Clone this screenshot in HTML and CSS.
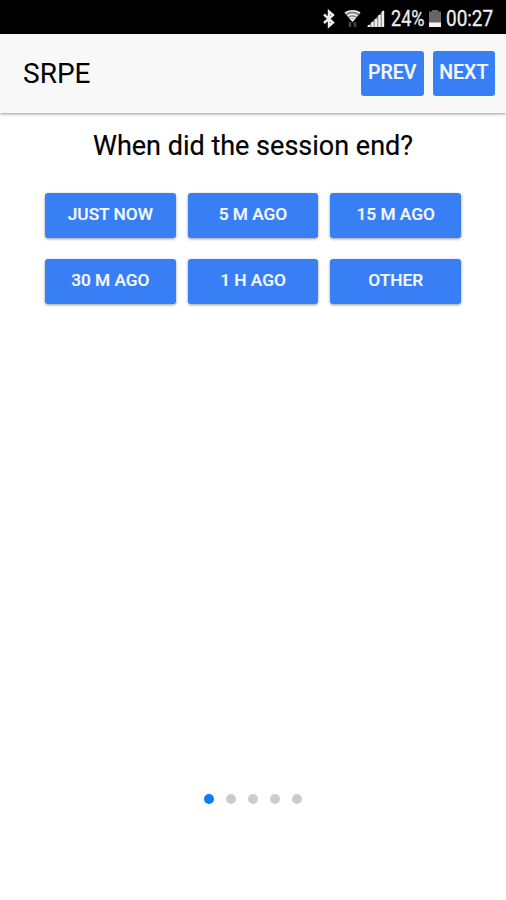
FILE: index.html
```
<!DOCTYPE html>
<html lang="en">
<head>
    <meta charset="UTF-8">
    <meta name="viewport" content="width=device-width, initial-scale=1.0">
    <title>SRPE</title>
    <link rel="stylesheet" href="styles.css">
</head>
<body>

    <div class="status-bar">
        <svg class="bluetooth" width="14" height="20" viewBox="0 0 14 20">
            <path d="M2 5.500L11 13.500L7 17V2.500L11 6L2 14" fill="none" stroke="#eee" stroke-width="2.400"/>
        </svg>
        <svg class="wifi" width="17" height="20" viewBox="0 0 17 20">
            <path d="M.5 4Q8.500 -1 16.500 4L8.500 13Z" fill="#888"/>
            <path d="M1 4Q8.500 -.5 16 4M3.500 7Q8.500 3.500 13.500 7M5.500 9.500Q8.500 7.500 11.500 9.500" fill="none" stroke="#eee" stroke-width="1.700"/>
            <path d="M6 10h5l-2.500 3z" fill="#eee"/>
            <path d="M6 13v5M11 13v5" stroke="#444" stroke-width="2.500"/>
        </svg>
        <svg class="signal" width="18" height="20" viewBox="0 0 18 20">
            <path d="M0 18L17 1V18Z" fill="#888"/>
            <path d="M2 18v-2M5.500 18v-5M9 18v-8M12.500 18v-12M16 18v-16" stroke="#eee" stroke-width="2.400"/>
        </svg>
        <span class="percent">24%</span>
        <svg class="battery" width="12" height="20" viewBox="0 0 12 20">
            <path d="M0 2.500h3V1h6v1.500h3V14H0z" fill="#666"/>
            <path d="M0 13.500h12V18H0z" fill="#f4f4f4"/>
        </svg>
        <span class="clock">00:27</span>
    </div>

    <header class="toolbar">
        <h1>SRPE</h1>
        <div class="nav-buttons">
            <button type="button">PREV</button>
            <button type="button">NEXT</button>
        </div>
    </header>

    <main class="content">
        <h2>When did the session end?</h2>
        <div class="options">
            <button type="button">JUST NOW</button>
            <button type="button">5 M AGO</button>
            <button type="button">15 M AGO</button>
            <button type="button">30 M AGO</button>
            <button type="button">1 H AGO</button>
            <button type="button">OTHER</button>
        </div>
    </main>

    <div class="pager">
        <span class="bullet active"></span>
        <span class="bullet"></span>
        <span class="bullet"></span>
        <span class="bullet"></span>
        <span class="bullet"></span>
    </div>

</body>
</html>
```
FILE: styles.css
```
* {
    box-sizing: border-box;
}
body {
    font-family: Roboto, sans-serif;
    background-color: #fff;
    color: #000;
    margin: 0;
    height: 900px;
    display: flex;
    flex-direction: column;
    overflow: hidden;
}
.status-bar {
    height: 34px;
    padding: 3px 12px 0 0;
    background-color: #000;
    color: #eee;
    display: flex;
    justify-content: flex-end;
    align-items: center;
    font-size: 22px;
    line-height: 30px;
    white-space: nowrap;
}
.wifi {
    margin-left: 8px;
}
.signal {
    margin-left: 6px;
}
/* status text is slightly condensed */
.percent,
.clock {
    -webkit-text-stroke: 0.3px #eee;
    transform-origin: left center;
}
.percent {
    width: 34px;
    margin-left: 6px;
    transform: scaleX(0.82);
}
.battery {
    margin-left: 4px;
}
.clock {
    width: 48px;
    margin-left: 5px;
    transform: scaleX(0.86);
}
.toolbar {
    height: 79px;
    padding: 0 11px 0 23px;
    background-color: #f8f8f8;
    box-shadow: 0 1px 3px rgba(0, 0, 0, 0.4);
    display: flex;
    justify-content: space-between;
    align-items: center;
}
h1 {
    margin: 0;
    font-size: 28px;
    font-weight: 400;
}
.nav-buttons {
    display: flex;
    gap: 9px;
}
button {
    height: 45px;
    padding: 0 0 3px;
    border: none;
    border-radius: 3px;
    background-color: #387ef5;
    color: #f4f8ff;
    font-family: inherit;
    font-weight: 500;
    white-space: nowrap;
    -webkit-text-stroke: 0.2px #f4f8ff;
}
.nav-buttons button {
    width: 62.5px;
    padding-bottom: 2px;
    font-size: 19.5px;
}
h2 {
    margin: 0;
    padding-top: 15px;
    font-size: 27px;
    line-height: 36px;
    font-weight: 400;
    text-align: center;
    -webkit-text-stroke: 0.2px #000;
}
.options {
    display: grid;
    grid-template-columns: repeat(3, 1fr);
    gap: 21px 12px;
    padding: 29px 45px 0;
}
.options button {
    font-size: 17.3px;
    box-shadow: 0 1px 3px rgba(0, 0, 0, 0.4);
}
.pager {
    margin-top: auto;
    padding-bottom: 96px;
    display: flex;
    justify-content: center;
    gap: 12px;
}
.bullet {
    width: 10px;
    height: 10px;
    border-radius: 50%;
    background-color: #ccc;
}
.active {
    background-color: #0a7aff;
}
```
